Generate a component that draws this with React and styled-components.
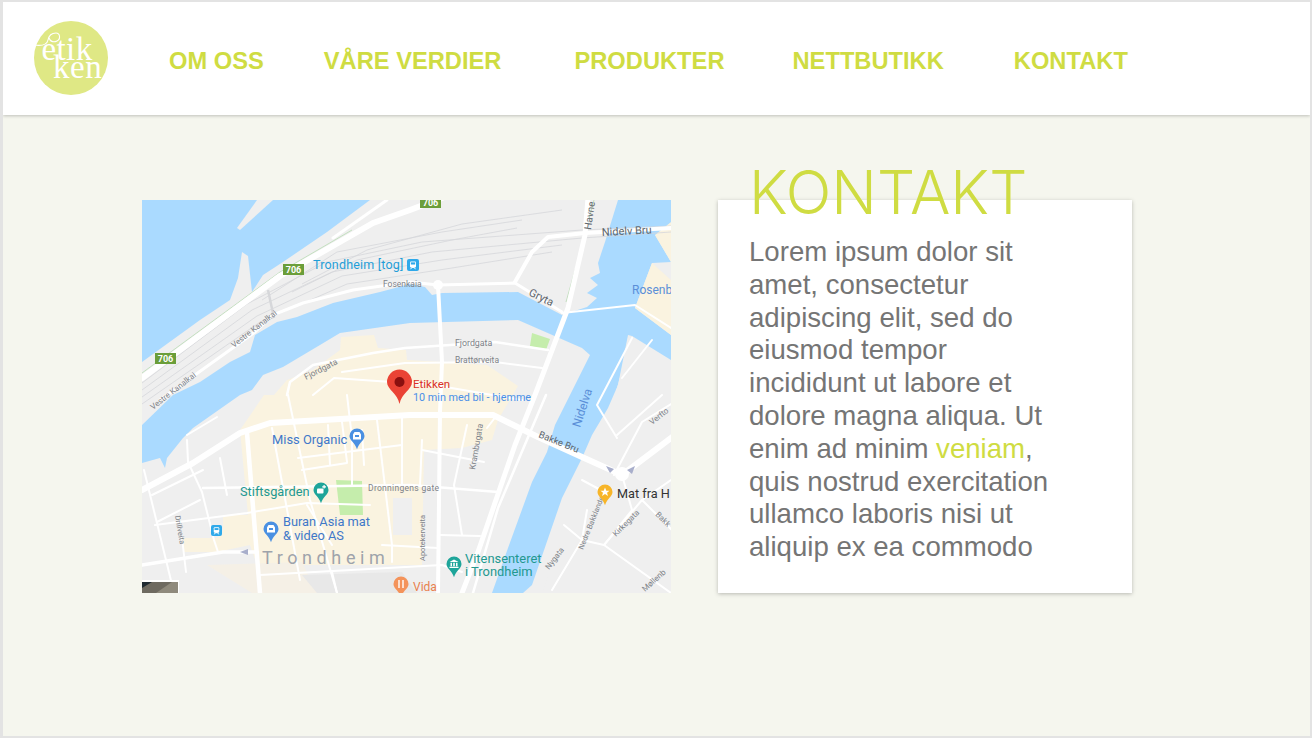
import React from "react";
import styled, { createGlobalStyle } from "styled-components";

const GlobalStyle = createGlobalStyle`
  html, body {
    margin: 0;
    padding: 0;
    background: #ffffff;
  }
`;

const Page = styled("div")`
  width: 1312px;
  height: 738px;
  box-sizing: border-box;
  border: 2px solid #e3e3e3;
  border-left-width: 3px;
  background: #f5f6ee;
  font-family: "Liberation Sans", Arial, sans-serif;
  overflow: hidden;
`;

const Header = styled("header")`
  height: 113px;
  background: #ffffff;
  box-shadow: 0 1px 3px rgba(0, 0, 0, 0.22);
  display: flex;
  align-items: center;
  padding-left: 29px;
`;

const LogoWrap = styled("div")`
  width: 78px;
  height: 78px;
  flex: none;
  margin-top: -1px;
`;

const Nav = styled("nav")`
  display: flex;
  margin: 5px 0 0 59px;
`;

const NavItem = styled("a")`
  margin-left: ${props => props.$gap}px;
  font-size: 23.7px;
  font-weight: 700;
  line-height: 28px;
  color: #cfdc42;
  white-space: nowrap;
`;

const Main = styled("main")`
  display: flex;
  align-items: flex-start;
  gap: 47px;
  padding: 85px 0 0 139px;
`;

const MapFrame = styled("div")`
  width: 529px;
  height: 393px;
  flex: none;
  overflow: hidden;
`;

const Card = styled("section")`
  width: 414px;
  height: 393px;
  box-sizing: border-box;
  padding: 0 31px;
  background: #ffffff;
  box-shadow: 0 1px 4px rgba(0, 0, 0, 0.25);
`;

const Title = styled("h1")`
  margin: -39px 0 0 0;
  font-family: Inter, "Liberation Sans", sans-serif;
  font-size: 60px;
  font-weight: 300;
  line-height: 62px;
  color: #cfdc42;
  white-space: nowrap;
`;

const Body = styled("p")`
  margin: 13px 0 0 0;
  max-width: 315px;
  font-size: 27.6px;
  line-height: 32.8px;
  color: #757575;
`;

const Accent = styled("span")`
  color: #cfdc42;
`;

const Logo = () => (
  <svg width="78" height="78" viewBox="0 0 78 78">
    <circle cx="39" cy="39" r="37" fill="#dfe885" />
    <g fill="#ffffff" fontFamily="'Liberation Serif', serif">
      <text x="9.5" y="41" fontSize="33" letterSpacing="0.4">etik</text>
      <text x="21" y="59" fontSize="33" letterSpacing="0.6">ken</text>
    </g>
    <path d="M2 26 C9 27 15 26 16 21 C17 16 20 14 24 14 C28 14 29 20 25 22 C21 24 18 22 17 19" fill="none" stroke="#ffffff" strokeWidth="1.1" />
  </svg>
);

const Road = ({ d, w = 2 }) => (
  <path d={d} fill="none" stroke="#ffffff" strokeWidth={w} strokeLinecap="round" strokeLinejoin="round" />
);

const Label = ({ x, y, size = 9, color = "#7d8288", rot = 0, weight = 400, spacing = 0, children }) => (
  <text
    x={x}
    y={y}
    fontSize={size}
    fill={color}
    fontWeight={weight}
    letterSpacing={spacing}
    fontFamily="Roboto, 'Liberation Sans', sans-serif"
    transform={rot ? `rotate(${rot} ${x} ${y})` : undefined}
  >
    {children}
  </text>
);

const Pin = ({ x, y, r = 8, color, children }) => (
  <g transform={`translate(${x} ${y})`}>
    <path d={`M${-r} 0 A${r} ${r} 0 1 1 ${r} 0 C${r} ${r * 0.6} 2 ${r * 0.9} 0 ${r * 1.75} C-2 ${r * 0.9} ${-r} ${r * 0.6} ${-r} 0 Z`} fill={color} />
    {children}
  </g>
);

const Shop = () => (
  <path d="M-4 -1.5 L-2.5 -4 H2.5 L4 -1.5 V3.5 H-4 Z M-2 -1 V1 H2 V-1 Z" fill="#ffffff" fillRule="evenodd" />
);

const Lodging = () => (
  <g fill="#ffffff">
    <rect x={-4} y={-1.5} width={6.5} height={5} rx={1} />
    <path d="M2.5 -5 H3.7 V-3.8 H5 V-2.6 H3.7 V-1.4 H2.5 V-2.6 H1.2 V-3.8 H2.5 Z" />
  </g>
);

const Museum = () => (
  <path d="M0 -4.5 L4.5 -2 H-4.5 Z M-3.5 -1.2 H-2 V2.2 H-3.5 Z M-0.8 -1.2 H0.8 V2.2 H-0.8 Z M2 -1.2 H3.5 V2.2 H2 Z M-4.5 2.8 H4.5 V4 H-4.5 Z" fill="#ffffff" />
);

const Transit = ({ x, y, size = 12 }) => (
  <g transform={`translate(${x} ${y})`}>
    <rect width={size} height={size} rx={2} fill="#2fa9ea" />
    <rect x={size * 0.25} y={size * 0.2} width={size * 0.5} height={size * 0.5} rx={1} fill="#ffffff" />
    <path d={`M${size * 0.3} ${size * 0.85} L${size * 0.4} ${size * 0.7} H${size * 0.6} L${size * 0.7} ${size * 0.85}`} stroke="#ffffff" strokeWidth="1" fill="none" />
    <rect x={size * 0.32} y={size * 0.28} width={size * 0.36} height={size * 0.18} fill="#2fa9ea" />
  </g>
);

const Shield = ({ x, y }) => (
  <g>
    <rect x={x} y={y} width="21" height="11" fill="#6b9e3a" />
    <text x={x + 10.5} y={y + 9} fontSize="9" fontWeight="700" textAnchor="middle" fill="#ffffff" fontFamily="Roboto, sans-serif">706</text>
  </g>
);

const CityMap = () => (
  <svg width="529" height="393" viewBox="0 0 529 393">
    <rect width="529" height="393" fill="#efefef" />

    {/* water */}
    <path fill="#aadaff" d="M0 0 L228 0 L185 32 L141 62 L121 75 L110 92 L106 56 L100 52 L96 78 L88 100 L58 120 L0 162 Z" />
    <path fill="#efefef" d="M131 0 L98 30 L95 28 L115 0 Z" />
    <path fill="#aadaff" d="M0 225 L31 195 L58 182 L88 162 L108 152 L113 135 L135 122 L155 117 L191 103 L238 92 L268 84 L283 87 L290 95 L300 93 L376 92 L420 115 L445 107 L455 98 L445 93 L456 85 L448 78 L458 73 L456 63 L463 42 L476 0 L529 0 L529 28 L513 35 L529 62 L510 63 L493 108 L529 135 L529 160 L490 136 L486 135 L476 185 L466 208 L450 235 L440 258 L420 298 L390 385 L381 393 L350 393 L366 348 L390 282 L405 252 L413 225 L428 195 L448 155 L440 148 L376 120 L268 123 L198 133 L178 145 L141 167 L121 175 L110 190 L98 195 L51 228 L41 238 L25 258 L23 268 L18 258 L0 263 Z" />

    {/* rosenborg side */}
    <path fill="#faf3e0" d="M513 35 L529 22 L529 62 Z M510 63 L529 80 L529 135 L493 108 Z" />
    <path fill="#efefef" d="M490 136 L529 172 L529 393 L468 393 L400 393 L470 205 Z" />

    {/* city blocks */}
    <path fill="#faf3e0" d="M132 195 L145 180 L171 170 L198 150 L199 137 L232 135 L236 148 L264 150 L265 160 L300 162 L345 165 L376 186 L356 220 L350 240 L320 248 L282 250 L280 365 L115 365 L108 345 L75 352 L41 352 L41 338 L75 338 L81 330 L81 315 L106 315 L98 230 L122 195 Z" />
    <path fill="#f5f0e6" d="M65 365 L160 362 L175 393 L110 393 Z" />
    <path fill="#efefef" d="M251 298 L270 298 L270 335 L251 335 Z" />
    <path fill="#e8e8e8" d="M160 375 L260 372 L275 393 L175 393 Z" />
    <path fill="#efefef" d="M282 250 L340 250 L340 393 L282 393 Z" />
    <path fill="#c5edac" d="M390 133 L408 139 L404 150 L388 146 Z" />
    <path fill="#c5edac" d="M194 280 L220 281 L221 315 L198 315 Z" />

    {/* rails */}
    <g fill="none" stroke="#d6d7da" strokeWidth="0.8">
      <path d="M0 190 L110 110 L190 72 L290 52 L440 38 L529 32" />
      <path d="M0 197 L115 116 L200 76 L300 60 L420 45" />
      <path d="M0 204 L118 122 L205 84 L310 68 L410 52" />
      <path d="M0 183 L105 104 L185 62 L280 42 L440 30 L529 26" />
      <path d="M120 100 L195 52 L300 32 L380 20" />
      <path d="M150 92 L215 60 L310 40 L375 28" />
      <path d="M160 84 L225 50 L320 24 L420 10" />
      <path d="M126 90 L132 118" strokeWidth="2.5" />
    </g>
    <path d="M0 173 L138 72 L210 30" fill="none" stroke="#b9dcb4" strokeWidth="0.8" />
    <path d="M452 0 L436 60 L424 102" fill="none" stroke="#b9dcb4" strokeWidth="0.8" />

    {/* main roads */}
    <Road w={6} d="M0 178 L138 76 L231 23 L268 10 L300 -2" />
    <Road w={3} d="M191 38 L245 0" />
    <Road w={3} d="M18 200 L113 132 L131 115 L161 103 L211 90 L268 82 L296 85 L373 83 L420 112" />
    <Road w={4} d="M296 85 L300 162 L298 212 L296 393" />
    <Road w={4} d="M373 82 L390 52 L406 37 L443 33 L529 28" />
    <Road w={5} d="M446 -2 L443 35 L426 108 L393 195 L373 245 L336 352 L320 393" />
    <Road w={2.5} d="M404 195 L356 308 L331 393" />
    <Road w={6} d="M0 290 L51 263 L98 233 L128 223 L268 215 L351 215 L396 237 L440 257 L480 275" />
    <Road w={6} d="M480 275 L533 235" />
    <Road w={4.5} d="M105 233 L118 393" />
    <Road w={2.5} d="M61 288 L268 285 L356 292" />
    <Road w={3.5} d="M0 365 L81 352 L115 352" />
    <Road w={2.5} d="M145 195 L148 182 L171 165 L231 153 L263 148 L353 142 L406 150" />
    <Road w={2} d="M200 172 L263 163 L353 162 L400 168" />
    <Road w={2} d="M171 195 L192 178 L292 185 L380 200" />
    <Road w={2} d="M45 235 L75 217" />

    {/* side streets */}
    <Road d="M45 240 L46 262 L60 292 L72 340 L76 352" />
    <Road d="M2 270 L24 360 L32 393" />
    <Road d="M10 295 L61 270" />
    <Road d="M15 322 L58 300" />
    <Road d="M13 325 L105 313 L165 303 L228 305" />
    <Road d="M40 338 L44 372" />
    <Road d="M78 258 L85 295" />
    <Road d="M130 228 L158 380" />
    <Road d="M146 195 L168 300 L195 393" />
    <Road d="M186 225 L188 265" />
    <Road d="M200 222 L205 262" />
    <Road d="M235 220 L250 345 L250 362" />
    <Road d="M156 258 L260 245" />
    <Road d="M160 270 L205 263" />
    <Road d="M205 195 L210 238 L210 285" />
    <Road d="M220 230 L222 265" />
    <Road d="M165 305 L190 345" />
    <Road d="M260 215 L260 285" />
    <Road d="M280 250 L342 262" />
    <Road d="M298 335 L338 336" />
    <Road d="M280 240 L278 285" />
    <Road d="M325 225 L312 285 L320 335" />
    <Road d="M240 345 L296 348" />
    <Road d="M118 375 L300 365 L320 372" />
    <Road d="M195 393 L190 372" />
    <Road d="M345 228 L355 215" />
    <Road d="M410 390 L440 340 L462 345 L500 300 L530 330" />
    <Road d="M440 340 L422 325" />
    <Road d="M462 345 L490 310 L480 275" />
    <Road d="M440 280 L468 295" />
    <Road d="M500 300 L529 280" />
    <Road d="M445 310 L440 340" />
    <Road d="M462 345 L529 393" />
    <Road d="M472 275 L500 222 L529 204" />
    <Road d="M490 138 L455 205 L475 238" />
    <Road d="M510 140 L480 178" />
    <Road d="M420 113 L493 105 L529 128" />
    <Road d="M475 235 L520 195" />
    <circle cx="480" cy="274" r="7" fill="#ffffff" />
    <circle cx="296" cy="85" r="5" fill="#ffffff" />
    <path d="M464 266 L472 269 L468 273 Z M493 266 L485 270 L490 274 Z" fill="#a8aecb" />

    <Shield x={278} y={-3} />
    <Shield x={141} y={64} />
    <Shield x={13} y={153} />

    <Label x={171} y={69} size={12.5} color="#1f9ed8" spacing={0.2}>Trondheim [tog]</Label>
    <Transit x={265} y={59} />
    <Label x={241} y={87} size={8.5}>Fosenkaia</Label>
    <Label x={386} y={95} size={11} color="#60666c" rot={26}>Gryta</Label>
    <Label x={449} y={30} size={10} color="#60666c" rot={-82}>Havne</Label>
    <Label x={460} y={36} size={11} color="#60666c" rot={-3}>Nidelv Bru</Label>
    <Label x={490} y={94} size={12} color="#5a8fd8">Rosenb</Label>
    <Label x={313} y={146} size={8.8}>Fjordgata</Label>
    <Label x={313} y={163} size={8.5}>Brattørveita</Label>
    <Label x={164} y={180} size={8.5} rot={-27}>Fjordgata</Label>
    <Label x={92} y={148} size={8} rot={-38}>Vestre Kanalkai</Label>
    <Label x={11} y={210} size={8} rot={-38}>Vestre Kanalkai</Label>
    <Label x={271} y={188} size={11.5} color="#d93025">Etikken</Label>
    <Label x={271} y={201} size={10.8} color="#4a8fe7">10 min med bil - hjemme</Label>
    <Label x={130} y={244} size={12.9} color="#3f78c9">Miss Organic</Label>
    <Label x={396} y={237} size={9.5} color="#60666c" rot={22}>Bakke Bru</Label>
    <Label x={438} y={228} size={12} color="#5a8fd8" rot={-72}>Nidelva</Label>
    <Label x={333} y={270} size={8.5} rot={-80}>Krambugata</Label>
    <Label x={226} y={291} size={8.5} spacing={0.3}>Dronningens gate</Label>
    <Label x={98} y={296} size={12.8} color="#22988f">Stiftsgården</Label>
    <Label x={141} y={326} size={12.8} color="#3f78c9">Buran Asia mat</Label>
    <Label x={141} y={340} size={12.8} color="#3f78c9">&amp; video AS</Label>
    <Label x={120} y={364} size={18} color="#9ea3ab" spacing={4.6}>Trondheim</Label>
    <Label x={475} y={298} size={12.7} color="#333333">Mat fra H</Label>
    <Label x={323} y={363} size={12.9} color="#22988f">Vitensenteret</Label>
    <Label x={323} y={376} size={12.9} color="#22988f">i Trondheim</Label>
    <Label x={271} y={391} size={12} color="#e8804e">Vida</Label>
    <Label x={283} y={361} size={7.5} rot={-90}>Apotekerveita</Label>
    <Label x={33} y={316} size={7.5} rot={80}>Drillveita</Label>
    <Label x={441} y={350} size={7.5} rot={-68}>Nedre Bakklandet</Label>
    <Label x={407} y={370} size={8} rot={-52}>Nygata</Label>
    <Label x={474} y={337} size={8} rot={-45}>Kirkegata</Label>
    <Label x={513} y={315} size={8} rot={45}>Bakk</Label>
    <Label x={503} y={392} size={8} rot={-42}>Møllenb</Label>
    <Label x={510} y={225} size={8} rot={-38}>Verfto</Label>

    <Pin x={215} y={236} r={7.5} color="#4a90e2"><Shop /></Pin>
    <Pin x={179} y={290} r={7.5} color="#1ea59a"><Lodging /></Pin>
    <Pin x={129} y={329} r={7.5} color="#4a90e2"><Shop /></Pin>
    <Pin x={312} y={364} r={7.5} color="#1ea59a"><Museum /></Pin>
    <Pin x={259} y={384} r={7.5} color="#f4935a">
      <path d="M-2 -4 V4 M2 -4 V4" stroke="#ffffff" strokeWidth="1.4" />
    </Pin>
    <Pin x={463} y={292} r={7.5} color="#f7b529">
      <path d="M0 -4.5 L1.3 -1.3 L4.5 -1.3 L2 0.8 L3 4 L0 2 L-3 4 L-2 0.8 L-4.5 -1.3 L-1.3 -1.3 Z" fill="#ffffff" />
    </Pin>
    <Transit x={69} y={325} size={11} />
    <path d="M98 352 L106 349 L106 355 Z" fill="#a8aecb" />

    <Pin x={257.5} y={182} r={12.5} color="#ea4335">
      <circle r={5} fill="#8a0f0f" />
    </Pin>

    <rect x={-1} y={380} width={38} height={14} fill="#ffffff" />
    <rect x={0} y={382} width={36} height={11} fill="#6e6a60" />
    <path d="M0 388 L10 382 H0 Z" fill="#1f2a30" />
    <path d="M14 393 L30 382 H36 V393 Z" fill="#8f8a7c" />
  </svg>
);

const navItems = [
  { label: "OM OSS", gap: 0 },
  { label: "VÅRE VERDIER", gap: 60 },
  { label: "PRODUKTER", gap: 73 },
  { label: "NETTBUTIKK", gap: 68 },
  { label: "KONTAKT", gap: 70 },
];

export default function App() {
  return (
    <Page>
      <GlobalStyle />
      <Header>
        <LogoWrap>
          <Logo />
        </LogoWrap>
        <Nav>
          {navItems.map(item => (
            <NavItem key={item.label} $gap={item.gap}>
              {item.label}
            </NavItem>
          ))}
        </Nav>
      </Header>
      <Main>
        <MapFrame>
          <CityMap />
        </MapFrame>
        <Card>
          <Title>KONTAKT</Title>
          <Body>
            Lorem ipsum dolor sit amet, consectetur adipiscing elit, sed do eiusmod tempor incididunt ut labore et
            dolore magna aliqua. Ut enim ad minim <Accent>veniam</Accent>, quis nostrud exercitation ullamco laboris
            nisi ut aliquip ex ea commodo
          </Body>
        </Card>
      </Main>
    </Page>
  );
}
